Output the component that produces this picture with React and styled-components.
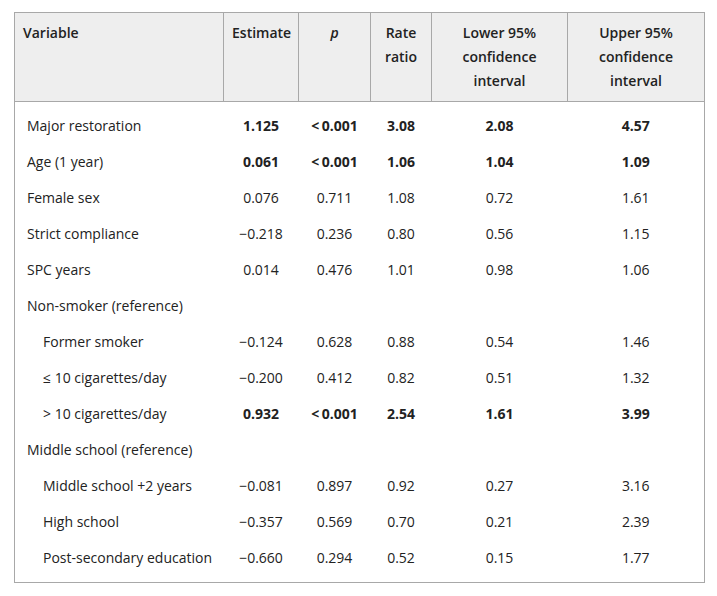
import React from "react";
import styled, { createGlobalStyle } from "styled-components";

const Global = createGlobalStyle`
  html, body { margin: 0; padding: 0; background: #fff; }
  body { font-family: "Open Sans", "Noto Sans", sans-serif; color: #222; }
`;

const Wrap = styled.div`
  padding: 12px 13px 14px 14px;
`;

const Table = styled.table`
  width: 690px;
  border-collapse: collapse;
  table-layout: fixed;
  border: 1px solid #a8a8a8;
  font-size: 14px;
  line-height: 24px;
`;

const HeadRow = styled.tr`
  background: #eeeeee;
  border-bottom: 1px solid #a8a8a8;
`;

const Th = styled.th`
  font-weight: 600;
  font-style: ${(p) => (p.$italic ? "italic" : "normal")};
  text-align: ${(p) => (p.$left ? "left" : "center")};
  vertical-align: top;
  padding: 8px 8px;
  border-right: 1px solid #a8a8a8;
  &:last-child { border-right: none; }
`;

const Body = styled.tbody`
  tr:first-child td { padding-top: 12px; }
  tr:last-child td { padding-bottom: 12px; }
`;

const Td = styled.td`
  padding: 6px 4px;
  text-align: center;
  font-weight: ${(p) => (p.$bold ? 700 : 400)};
  white-space: nowrap;
`;

const LabelTd = styled.td`
  padding: 6px 4px 6px ${(p) => (p.$indent ? 28 : 12)}px;
  text-align: left;
  white-space: nowrap;
`;

const rows = [
  ["Major restoration", false, ["1.125", "<\u20090.001", "3.08", "2.08", "4.57"], true],
  ["Age (1 year)", false, ["0.061", "<\u20090.001", "1.06", "1.04", "1.09"], true],
  ["Female sex", false, ["0.076", "0.711", "1.08", "0.72", "1.61"]],
  ["Strict compliance", false, ["\u22120.218", "0.236", "0.80", "0.56", "1.15"]],
  ["SPC years", false, ["0.014", "0.476", "1.01", "0.98", "1.06"]],
  ["Non-smoker (reference)", false, null],
  ["Former smoker", true, ["\u22120.124", "0.628", "0.88", "0.54", "1.46"]],
  ["\u2264 10 cigarettes/day", true, ["\u22120.200", "0.412", "0.82", "0.51", "1.32"]],
  ["> 10 cigarettes/day", true, ["0.932", "<\u20090.001", "2.54", "1.61", "3.99"], true],
  ["Middle school (reference)", false, null],
  ["Middle school +2 years", true, ["\u22120.081", "0.897", "0.92", "0.27", "3.16"]],
  ["High school", true, ["\u22120.357", "0.569", "0.70", "0.21", "2.39"]],
  ["Post-secondary education", true, ["\u22120.660", "0.294", "0.52", "0.15", "1.77"]],
];

export default function App() {
  return (
    <Wrap>
      <Global />
      <Table>
        <colgroup>
          <col style={{ width: 209 }} />
          <col style={{ width: 75 }} />
          <col style={{ width: 72 }} />
          <col style={{ width: 61 }} />
          <col style={{ width: 136 }} />
          <col style={{ width: 137 }} />
        </colgroup>
        <thead>
          <HeadRow>
            <Th $left>Variable</Th>
            <Th>Estimate</Th>
            <Th $italic>p</Th>
            <Th>Rate ratio</Th>
            <Th>Lower 95% confidence interval</Th>
            <Th>Upper 95% confidence interval</Th>
          </HeadRow>
        </thead>
        <Body>
          {rows.map(([label, indent, vals, bold]) => (
            <tr key={label}>
              <LabelTd $indent={indent}>{label}</LabelTd>
              {vals
                ? vals.map((v, i) => (
                    <Td key={i} $bold={bold}>
                      {v}
                    </Td>
                  ))
                : [0, 1, 2, 3, 4].map((i) => <Td key={i} />)}
            </tr>
          ))}
        </Body>
      </Table>
    </Wrap>
  );
}
